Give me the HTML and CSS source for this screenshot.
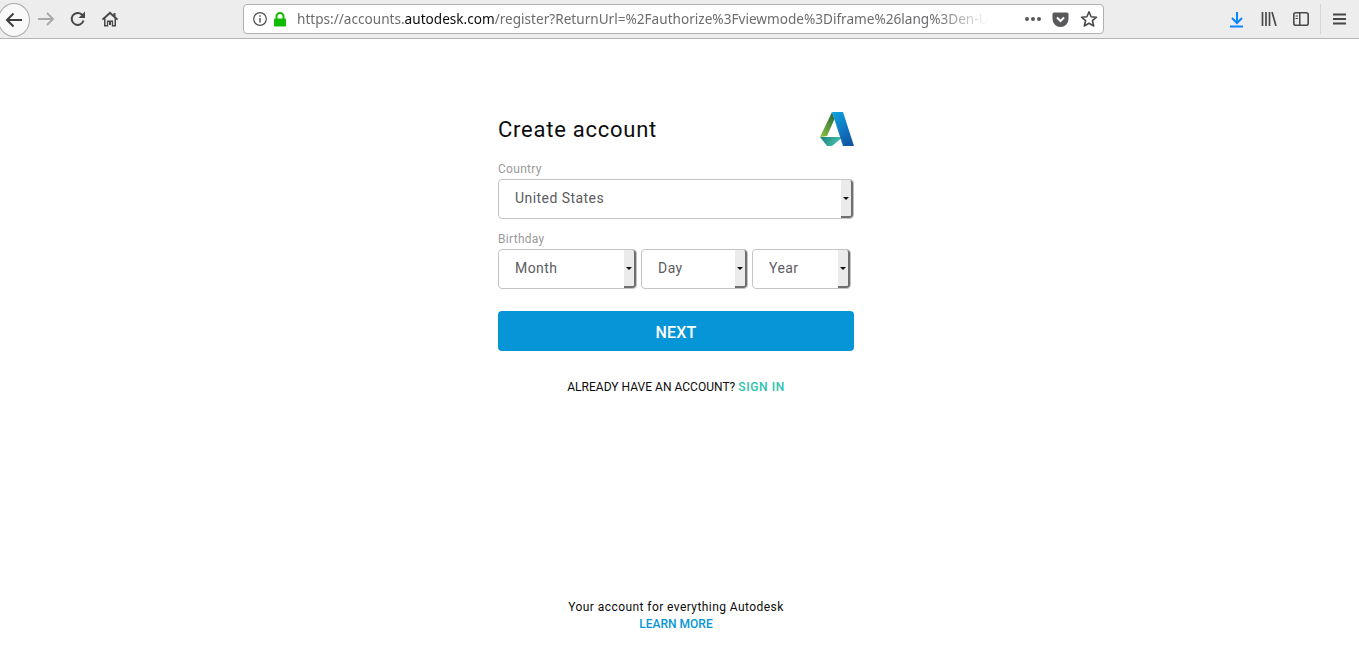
FILE: index.html
```html
<!DOCTYPE html>
<html lang="en">
<head>
<meta charset="utf-8">
<title>Create account</title>
<link rel="stylesheet" href="styles.css">
</head>
<body>
<header class="toolbar">
  <div class="nav">
    <button class="back" aria-label="Back"><svg width="20" height="20" viewBox="0 0 20 20"><path d="M18 10H3M9.500 3.500 3 10l6.500 6.500" fill="none" stroke="#3d3d40" stroke-width="2"/></svg></button>
    <span class="tool fwd"><svg width="18" height="18" viewBox="0 0 18 18"><path d="M1 9h15M10 3l6 6-6 6" fill="none" stroke="#a8a8aa" stroke-width="1.800"/></svg></span>
    <span class="tool reload"><svg width="18" height="18" viewBox="0 0 18 18"><path d="M14.500 10.500A6 6 0 1 1 12.800 4.500L15 6.500" fill="none" stroke="#47474a" stroke-width="2"/><path d="M16 1.500V8H9.500z" fill="#47474a"/></svg></span>
    <span class="tool home"><svg width="18" height="18" viewBox="0 0 18 18"><path d="M9 1.500.8 9l1.200 1.300L3 9.400V16.500h4.200V12h3.600v4.500H15V9.400l1 .9L17.200 9 14.500 6.500V3h-2v1.700z" fill="#47474a"/><path d="M9 4.200 13.500 8.300V15h-1.400v-4.500H5.900V15H4.500V8.300z" fill="#ededed"/><rect x="8" y="12" width="2" height="3" fill="#47474a"/></svg></span>
  </div>
  <div class="urlbar">
    <svg class="info" width="16" height="16" viewBox="0 0 16 16"><circle cx="8" cy="8" r="6.300" fill="none" stroke="#4d4d4f" stroke-width="1.200"/><rect x="7.300" y="7" width="1.400" height="4.500" fill="#4d4d4f"/><rect x="7.300" y="4.300" width="1.400" height="1.500" fill="#4d4d4f"/></svg>
    <svg class="lock" width="14" height="15" viewBox="0 0 14 15"><path d="M3.500 7V4.500a3.500 3.500 0 0 1 7 0V7" fill="none" stroke="#12bc00" stroke-width="2"/><rect x="1" y="6.500" width="12" height="8" rx="1" fill="#12bc00"/></svg>
    <div class="url"><span class="url-dim">https://accounts.</span><span class="url-host">autodesk.com</span><span class="url-dim">/register?ReturnUrl=%2Fauthorize%3Fviewmode%3Diframe%26lang%3Den-U</span></div>
    <span class="dots"><i></i><i></i><i></i></span>
    <svg class="pocket" width="17" height="15" viewBox="0 0 17 15"><path d="M2 .5h13A1.500 1.500 0 0 1 16.500 2v5a8 8 0 0 1-16 0V2A1.500 1.500 0 0 1 2 .5z" fill="#59595c"/><path d="M5 5.500 8.500 9 12 5.500" fill="none" stroke="#fff" stroke-width="2"/></svg>
    <svg class="star" width="18" height="18" viewBox="0 0 18 18"><path d="M9 1.800 11.100 6.700 16.500 7.200 12.400 10.700 13.700 16 9 13.200 4.300 16 5.600 10.700 1.500 7.200 6.900 6.700z" fill="none" stroke="#4a4a4d" stroke-width="1.600" stroke-linejoin="round"/></svg>
  </div>
  <div class="tools-right">
    <svg class="dl" width="16" height="17" viewBox="0 0 16 17"><path d="M8 1v10M3 7l5 5 5-5" fill="none" stroke="#0a84ff" stroke-width="2"/><rect x="1" y="14.500" width="13" height="2" fill="#0a84ff"/></svg>
    <svg class="lib" width="16" height="14" viewBox="0 0 16 14"><path d="M1.500 0v14M5 0v14M8.500 0v14M11 0l4 14" fill="none" stroke="#4a4a4d" stroke-width="1.700"/></svg>
    <svg class="side" width="16" height="14" viewBox="0 0 16 14"><rect x=".8" y=".8" width="14.400" height="12.400" rx="2" fill="none" stroke="#4a4a4d" stroke-width="1.600"/><rect x="6" y="1" width="1.500" height="12" fill="#4a4a4d"/><path d="M2.500 4H5M2.500 6.500H5" stroke="#4a4a4d"/></svg>
    <span class="divider"></span>
    <svg class="menu" width="13" height="12" viewBox="0 0 13 12"><path d="M0 1.500h13M0 6h13M0 10.500h13" stroke="#47474a" stroke-width="1.800"/></svg>
  </div>
</header>

<main class="page">
  <section class="card">
    <div class="title-row">
      <h1 class="title">Create account</h1>
      <svg class="logo" width="35" height="35" viewBox="0 0 35 35">
        <defs>
          <linearGradient id="gL" x1="0" y1="1" x2="0.700" y2="0"><stop offset="0" stop-color="#8dc63f"/><stop offset="1" stop-color="#2f6f3a"/></linearGradient>
          <linearGradient id="gB" x1="0" y1="0" x2="0.600" y2="1"><stop offset="0" stop-color="#0ea5e4"/><stop offset="1" stop-color="#1258a8"/></linearGradient>
          <linearGradient id="gT" x1="0" y1="0" x2="1" y2="0.300"><stop offset="0" stop-color="#157f78"/><stop offset="1" stop-color="#4cc4b4"/></linearGradient>
        </defs>
        <path d="M13 0 1 25 8 24 15.500 7z" fill="url(#gL)"/>
        <path d="M1 25 8 34H13L24 25z" fill="url(#gT)"/>
        <path d="M13 0H24L35 34H24z" fill="url(#gB)"/>
      </svg>
    </div>

    <label class="label">Country</label>
    <div class="select select-full"><span class="select-text">United States</span><span class="arrow"></span></div>

    <label class="label label-birthday">Birthday</label>
    <div class="birthday">
      <div class="select select-month"><span class="select-text">Month</span><span class="arrow"></span></div>
      <div class="select select-day"><span class="select-text">Day</span><span class="arrow"></span></div>
      <div class="select select-year"><span class="select-text">Year</span><span class="arrow"></span></div>
    </div>

    <button class="next">NEXT</button>
    <p class="signin">ALREADY HAVE AN ACCOUNT? <a class="signin-link">SIGN IN</a></p>
  </section>

  <footer class="foot">
    <p class="foot-text">Your account for everything Autodesk</p>
    <a class="foot-link">LEARN MORE</a>
  </footer>
</main>
</body>
</html>
```
FILE: styles.css
```css
* { box-sizing: border-box; }
html, body { margin: 0; height: 100%; overflow: hidden; background: #fff; }
body { font-family: Roboto, "Noto Sans", sans-serif; }

.toolbar {
  height: 39px;
  background: #ededed;
  border-bottom: 1px solid #b4b4b4;
  display: flex;
  align-items: center;
}
.nav { display: flex; align-items: center; width: 243px; flex: none; }
.back {
  width: 32px; height: 34px; margin-left: -2px; margin-top: 1px; padding: 0;
  border: 1px solid #a9a9a9; border-radius: 50%;
  background: #f9f9f9; display: flex; align-items: center; justify-content: center;
}
.tool { display: flex; width: 18px; height: 18px; }
.fwd { margin-left: 7px; }
.reload { margin-left: 14px; }
.home { margin-left: 14px; }

.urlbar {
  width: 861px; height: 30px; flex: none;
  background: #fff;
  border: 1px solid #b1b1b3;
  border-radius: 4px;
  display: flex; align-items: center;
  padding: 0 6px 0 8px;
}
.info { flex: none; }
.lock { flex: none; margin-left: 5px; }
.url {
  flex: none; width: 698px; margin-left: 10px;
  font-family: "Noto Sans", sans-serif;
  font-size: 13.6px; white-space: nowrap; overflow: hidden; line-height: 28px;
  -webkit-mask-image: linear-gradient(to right, #000 640px, transparent 692px);
  mask-image: linear-gradient(to right, #000 640px, transparent 692px);
}
.url-dim { color: #6d6d6f; }
.url-host { color: #0c0c0d; }
.dots { display: flex; gap: 2px; margin-left: 30px; flex: none; }
.dots i { width: 4px; height: 4px; border-radius: 50%; background: #59595c; display: block; }
.pocket { margin-left: 11px; flex: none; }
.star { margin-left: 11px; flex: none; }

.tools-right { display: flex; align-items: center; flex: none; margin-left: 125px; }
.lib { margin-left: 16px; }
.side { margin-left: 16px; }
.divider { width: 1px; height: 30px; background: #d6d6d6; margin-left: 11px; }
.menu { margin-left: 12px; }

.page { width: 1352px; display: flex; flex-direction: column; align-items: center; }
.card { width: 356px; padding-top: 71px; }
.title-row { display: flex; justify-content: space-between; align-items: flex-start; height: 48px; }
.title { margin: 0; font-size: 22px; font-weight: 400; color: #0c0c0d; line-height: 40px; letter-spacing: .75px; }
.logo { margin-top: 2px; }

.label { display: block; font-size: 12px; line-height: 16px; color: #9a9a9a; height: 16px; margin-top: 3px; margin-bottom: 2px; letter-spacing: .3px; }
.label-birthday { margin-top: 12px; margin-bottom: 2px; }

.select {
  height: 40px; border: 1px solid #c4c4c4; border-radius: 4px; background: #fff;
  display: flex; align-items: stretch; justify-content: space-between;
  color: #5c5c5f; font-size: 14px; overflow: hidden;
}
.select-full { width: 356px; }
.select-text { padding-left: 16px; line-height: 36px; letter-spacing: .45px; }
.arrow {
  width: 12px; background: #ebebeb; flex: none;
  border-right: 2px solid #6f6f6f; border-bottom: 2px solid #6f6f6f;
  border-radius: 0 3px 3px 0;
  display: flex; align-items: center; justify-content: center;
}
.arrow::after {
  content: ""; width: 0; height: 0;
  border-left: 3px solid transparent; border-right: 3px solid transparent; border-top: 3px solid #111;
}
.birthday { display: flex; gap: 4px; }
.select-month { width: 139px; }
.select-day { width: 107px; }
.select-year { width: 99px; }

.next {
  display: block; width: 356px; height: 40px; margin-top: 22px; padding: 2px 0 0;
  border: 0; border-radius: 4px; background: #0696d7; color: #fff;
  font: 500 16px Roboto, sans-serif; letter-spacing: .15px;
}
.signin { margin: 27px 0 0; text-align: center; font-size: 12px; line-height: 18px; color: #0c0c0d; letter-spacing: .02px; }
.signin-link { color: #2bc2b0; font-weight: 500; letter-spacing: .6px; }

.foot { margin-top: 203px; text-align: center; }
.foot-text { margin: 0; font-size: 12px; line-height: 17px; color: #0c0c0d; letter-spacing: .43px; }
.foot-link { display: block; font-size: 12px; font-weight: 500; line-height: 17px; color: #0696d7; letter-spacing: 0; }
```
